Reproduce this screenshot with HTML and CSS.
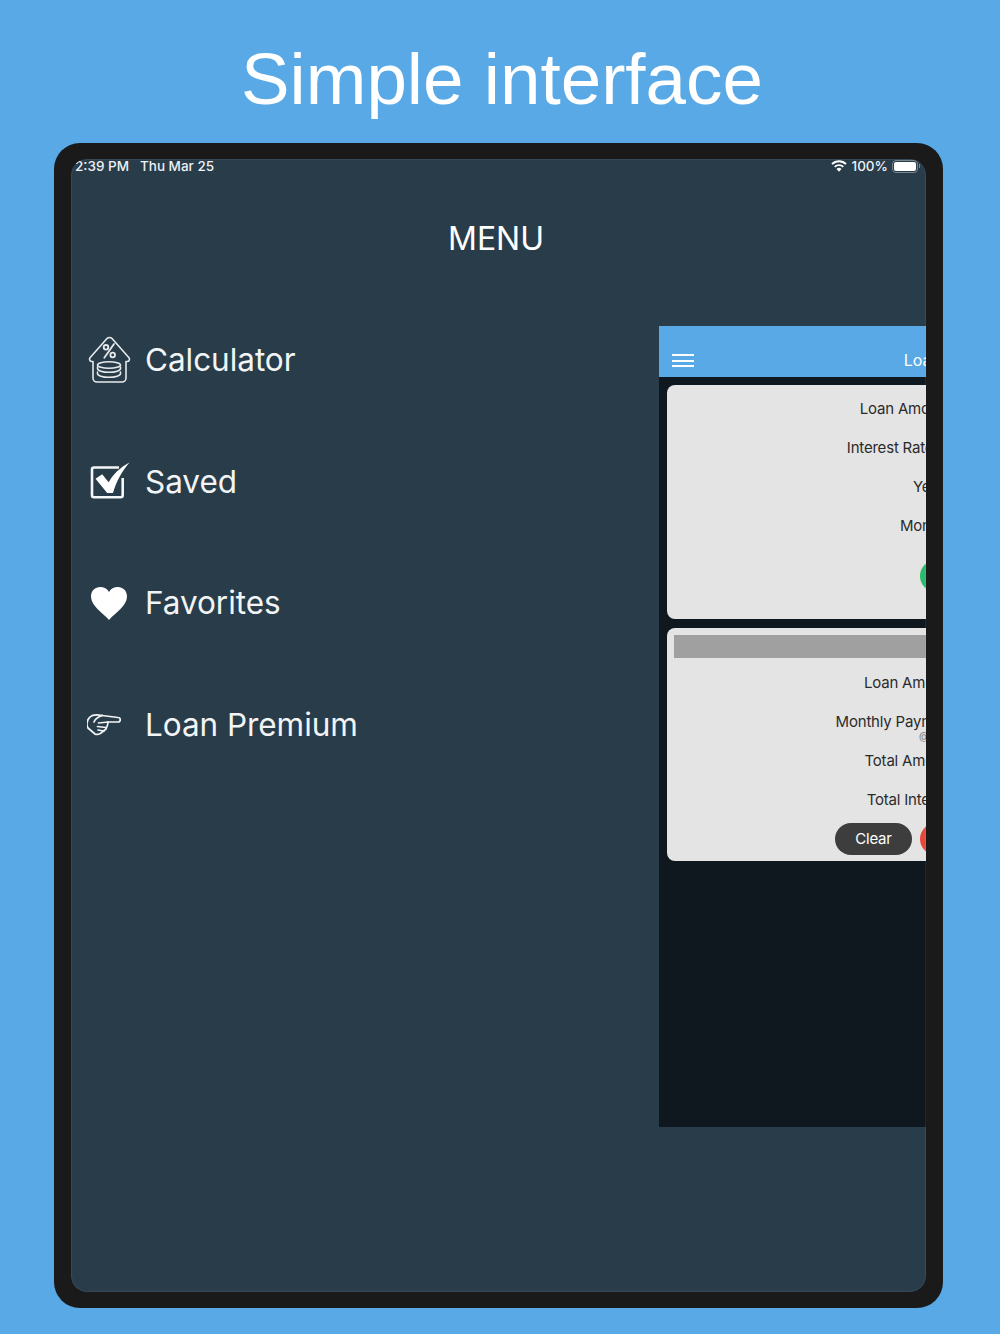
FILE: index.html
```html
<!DOCTYPE html>
<html lang="en">
<head>
    <meta charset="UTF-8">
    <meta name="viewport" content="width=device-width, initial-scale=1.0">
    <title>Simple interface</title>
    <link rel="stylesheet" href="styles.css">
</head>
<body>
    <h1 class="headline">Simple interface</h1>

    <div class="frame">
        <div class="screen">
            <div class="status">
                <span class="status-left">2:39 PM<span class="status-date">Thu Mar 25</span></span>
                <span class="status-right">
                    <svg class="wifi" viewBox="0 0 16 12" width="16" height="12">
                        <path d="M8 11.800l-2.500-2.900a3.600 3.600 0 0 1 5 0z" fill="#fff"/>
                        <path d="M3.700 6.900a6.200 6.200 0 0 1 8.600 0" fill="none" stroke="#fff" stroke-width="1.900"/>
                        <path d="M1 4.100a10 10 0 0 1 14 0" fill="none" stroke="#fff" stroke-width="1.900"/>
                    </svg>
                    <span>100%</span>
                    <span class="battery"><span class="battery-fill"></span></span>
                </span>
            </div>

            <h2 class="menu-title">MENU</h2>

            <ul class="menu">
                <li class="menu-item">
                    <span class="menu-icon">
                        <svg viewBox="0 0 44 48" width="44" height="48" fill="none" stroke="#e6eaec" stroke-width="1.600" stroke-linejoin="round" stroke-linecap="round">
                            <path d="M6 25.500V42a4 4 0 0 0 4 4h25a4 4 0 0 0 4-4V25.500h1a2.300 2.300 0 0 0 2-3.700L25 2.500a3.500 3.500 0 0 0-5 0L3 21.800a2.300 2.300 0 0 0 2 3.700z"/>
                            <path d="M27 8L17.300 21.700" stroke-width="1.800"/>
                            <circle cx="19" cy="11.300" r="2.300" stroke-width="1.800"/>
                            <circle cx="25.700" cy="19" r="2.300" stroke-width="1.800"/>
                            <ellipse cx="22" cy="29" rx="11.500" ry="3.300"/>
                            <path d="M10.500 31v1.500c0 2 5 3.800 11.500 3.800s11.500-1.800 11.500-3.800V31"/>
                            <path d="M10.500 36v1.500c0 2 5 3.800 11.500 3.800s11.500-1.800 11.500-3.800V36"/>
                        </svg>
                    </span>
                    Calculator
                </li>
                <li class="menu-item">
                    <span class="menu-icon">
                        <svg viewBox="0 0 44 40" width="44" height="40">
                            <path d="M35.700 17v17.200a2 2 0 0 1-2 2H7a2 2 0 0 1-2-2V8.500a2 2 0 0 1 2-2h25" fill="none" stroke="#f4f6f7" stroke-width="2.600" stroke-linejoin="round"/>
                            <path d="M8.500 17.800l6.700-4.500 6.400 8C26 13.500 33 6.500 42.500 1.500 35 10 29.500 20 26 32h-5.800z" fill="#fff"/>
                        </svg>
                    </span>
                    Saved
                </li>
                <li class="menu-item">
                    <span class="menu-icon">
                        <svg viewBox="0 0 38 36" width="38" height="36">
                            <path d="M19 35C13 28 1 21 1 11.500 1 5.500 5.500 2 10 2c4 0 7.300 1.800 9 5 1.700-3.200 5-5 9-5 4.500 0 9 3.500 9 9.500C37 21 25 28 19 35z" fill="#fff"/>
                        </svg>
                    </span>
                    Favorites
                </li>
                <li class="menu-item">
                    <span class="menu-icon">
                        <svg viewBox="5 0 44 34" width="44" height="34" fill="none" stroke="#f2f4f5" stroke-width="1.700" stroke-linejoin="round" stroke-linecap="round">
                            <path d="M20 7.500L36 9.500a2.200 2.200 0 0 1 0 4.500H26"/>
                            <path d="M20 7.500C15 6.500 10 7 8 9 5 12 4 16 6 20l7 6c2 1 5 0 6-1l5-4c1-2 2-4 2-7"/>
                            <path d="M20 7.500c-4 1.500-7 3.500-8 6.500"/>
                            <path d="M16.500 15L26 14M15.500 18.500l8.500 1M16 22l6 1"/>
                        </svg>
                    </span>
                    Loan Premium
                </li>
            </ul>

            <div class="panel">
                <div class="panel-header">
                    <span class="burger"><i></i><i></i><i></i></span>
                    <span class="panel-title">Loan Calculator</span>
                </div>

                <div class="card card-input">
                    <div class="row"><span class="label">Loan Amount:</span></div>
                    <div class="row"><span class="label">Interest Rate %:</span></div>
                    <div class="row"><span class="label">Years:</span></div>
                    <div class="row"><span class="label">Months:</span></div>
                    <div class="actions actions-input">
                        <span class="btn btn-green"></span>
                    </div>
                </div>

                <div class="card card-result">
                    <div class="bar"></div>
                    <div class="row"><span class="label">Loan Amount</span></div>
                    <div class="row"><span class="label">Monthly Payment<span class="sub">@ 3.5%</span></span></div>
                    <div class="row"><span class="label">Total Amount</span></div>
                    <div class="row"><span class="label">Total Interest</span></div>
                    <div class="actions">
                        <span class="btn btn-dark">Clear</span>
                        <span class="btn btn-red"></span>
                    </div>
                </div>
            </div>
        </div>
    </div>
</body>
</html>
```

FILE: styles.css
```css
* {
    box-sizing: border-box;
}

body {
    margin: 0;
    height: 1334px;
    overflow: hidden;
    background-color: #58a9e6;
    font-family: Inter, "Noto Sans", sans-serif;
    color: #fff;
}

.headline {
    margin: 0;
    height: 143px;
    padding-top: 33px;
    padding-left: 4px;
    text-align: center;
    font-family: "Liberation Sans", Arial, sans-serif;
    font-size: 72.8px;
    line-height: 92px;
    font-weight: 400;
}

.frame {
    width: 889px;
    height: 1165px;
    margin-left: 54px;
    padding: 16px 17px;
    background-color: #1a1a1a;
    border-radius: 26px;
}

.screen {
    position: relative;
    height: 100%;
    overflow: hidden;
    background-color: #283c4a;
    border-radius: 16px;
}

/* thin light edge of the glass */
.screen::after {
    content: "";
    position: absolute;
    top: 0;
    right: 0;
    bottom: 0;
    left: 0;
    border: 1px solid rgba(255, 255, 255, 0.07);
    border-radius: 16px;
}

/* status bar */
.status {
    display: flex;
    justify-content: space-between;
    align-items: center;
    height: 14px;
    padding: 0 7px 0 4px;
    font-size: 13.5px;
    font-weight: 500;
    color: #eef1f3;
}

.status-date {
    margin-left: 11px;
}

.status-right {
    display: flex;
    align-items: center;
    gap: 5px;
}

.battery {
    position: relative;
    display: block;
    width: 26px;
    height: 13px;
    margin-left: -1px;
    margin-right: 1px;
    padding: 1px;
    border: 1px solid #77858e;
    border-radius: 4px;
}

.battery::after {
    content: "";
    position: absolute;
    right: -3px;
    top: 3px;
    width: 1px;
    height: 4px;
    background-color: #77858e;
}

.battery-fill {
    display: block;
    height: 100%;
    background-color: #fff;
    border-radius: 2px;
}

/* menu */
.menu-title {
    margin: 43px 0 0;
    padding-right: 5px;
    height: 83px;
    text-align: center;
    font-size: 32px;
    line-height: 46px;
    font-weight: 400;
}

.menu {
    margin: 0;
    padding: 0 0 0 16px;
    list-style: none;
}

.menu-item {
    display: flex;
    align-items: center;
    height: 121.6px;
    font-size: 31.5px;
    letter-spacing: -0.05px;
    color: #f2f4f5;
}

.menu-icon {
    display: flex;
    justify-content: center;
    align-items: center;
    width: 44px;
    margin-right: 14px;
}

/* app preview sliding out from the right */
.panel {
    position: absolute;
    left: 588px;
    top: 167px;
    width: 598px;
    height: 801px;
    background-color: #10181f;
}

.panel-header {
    position: relative;
    display: flex;
    justify-content: center;
    align-items: flex-end;
    height: 51px;
    padding-left: 10px;
    padding-bottom: 7px;
    background-color: #58a9e6;
    font-size: 16px;
    line-height: 20px;
}

.burger {
    position: absolute;
    left: 13px;
    bottom: 10px;
    display: flex;
    flex-direction: column;
    gap: 3.5px;
    width: 22px;
}

.burger i {
    display: block;
    height: 2px;
    background-color: #fff;
}

.card {
    width: 582px;
    margin: 8px 8px 0;
    background-color: #e4e4e4;
    border-radius: 8px;
    color: #2b2b2b;
    font-size: 15px;
    letter-spacing: -0.2px;
}

.card-input {
    height: 234px;
    padding-top: 4px;
}

.card-result {
    height: 233px;
    margin-top: 9px;
    padding-top: 7px;
}

.bar {
    height: 23px;
    margin: 0 7px 5px;
    background-color: #a0a0a0;
}

.row {
    display: flex;
    align-items: center;
    height: 39px;
}

.label {
    position: relative;
    width: 289px;
    text-align: right;
    white-space: nowrap;
}

.sub {
    position: absolute;
    right: 0;
    top: 19px;
    font-size: 10px;
    line-height: 12px;
    color: #777;
    letter-spacing: 0;
}

.actions {
    display: flex;
    align-items: center;
    gap: 8px;
    height: 32px;
    margin-top: 4px;
    padding-left: 168px;
    color: #fff;
}

.actions-input {
    margin-top: 15px;
    padding-left: 253px;
}

.btn {
    display: block;
    width: 77px;
    height: 32px;
    border-radius: 16px;
    text-align: center;
    line-height: 32px;
}

.btn-dark {
    background-color: #3d3d3d;
}

.btn-red {
    background-color: #e8483a;
}

.btn-green {
    background-color: #2cbb6c;
}
```
